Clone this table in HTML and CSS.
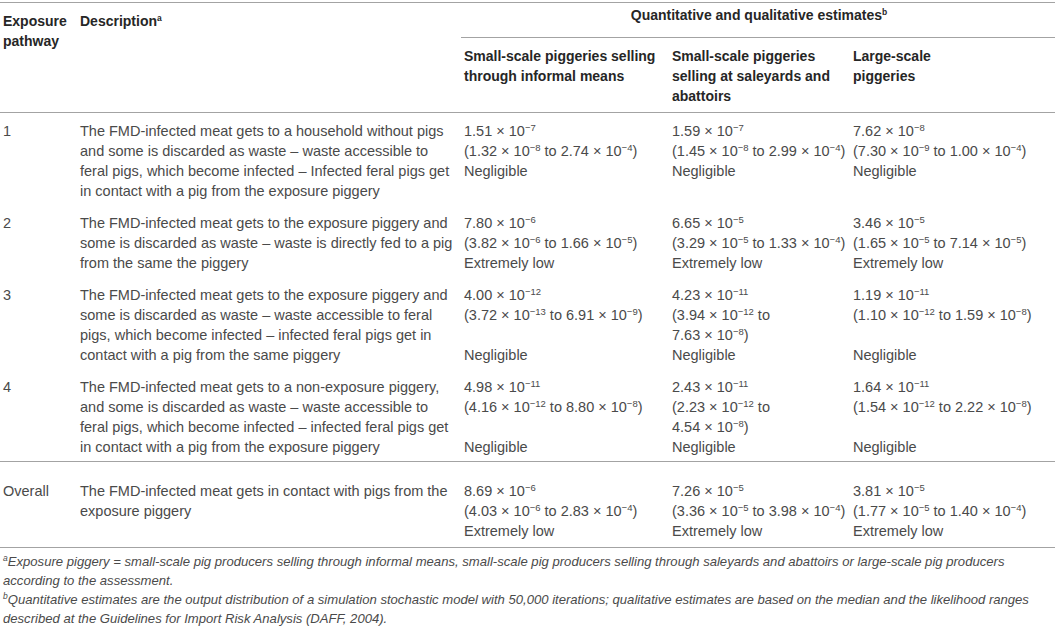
FILE: index.html
```
<!DOCTYPE html>
<html lang="en">
<head>
<meta charset="utf-8">
<title>Exposure pathways</title>
<link rel="stylesheet" href="styles.css">
</head>
<body class="page">
<table class="tbl">
  <colgroup>
    <col class="c-path"><col class="c-desc"><col class="c-q1"><col class="c-q2"><col class="c-q3">
  </colgroup>
  <thead class="thead">
    <tr>
      <th class="th th-side" rowspan="2">Exposure<br>pathway</th>
      <th class="th th-side" rowspan="2">Description<sup class="fn">a</sup></th>
      <th class="th th-span" colspan="3"><span class="span-label">Quantitative and qualitative estimates<sup class="fn">b</sup></span></th>
    </tr>
    <tr>
      <th class="th th-sub">Small-scale piggeries selling<br>through informal means</th>
      <th class="th th-sub">Small-scale piggeries<br>selling at saleyards and<br>abattoirs</th>
      <th class="th th-sub">Large-scale<br>piggeries</th>
    </tr>
  </thead>
  <tbody class="tbody">
    <tr class="row">
      <td class="td">1</td>
      <td class="td">The FMD-infected meat gets to a household without pigs<br>and some is discarded as waste – waste accessible to<br>feral pigs, which become infected – Infected feral pigs get<br>in contact with a pig from the exposure piggery</td>
      <td class="td">1.51 × 10<sup class="ex">−7</sup><br>(1.32 × 10<sup class="ex">−8</sup> to 2.74 × 10<sup class="ex">−4</sup>)<br>Negligible</td>
      <td class="td">1.59 × 10<sup class="ex">−7</sup><br>(1.45 × 10<sup class="ex">−8</sup> to 2.99 × 10<sup class="ex">−4</sup>)<br>Negligible</td>
      <td class="td">7.62 × 10<sup class="ex">−8</sup><br>(7.30 × 10<sup class="ex">−9</sup> to 1.00 × 10<sup class="ex">−4</sup>)<br>Negligible</td>
    </tr>
    <tr class="row">
      <td class="td">2</td>
      <td class="td">The FMD-infected meat gets to the exposure piggery and<br>some is discarded as waste – waste is directly fed to a pig<br>from the same the piggery</td>
      <td class="td">7.80 × 10<sup class="ex">−6</sup><br>(3.82 × 10<sup class="ex">−6</sup> to 1.66 × 10<sup class="ex">−5</sup>)<br>Extremely low</td>
      <td class="td">6.65 × 10<sup class="ex">−5</sup><br>(3.29 × 10<sup class="ex">−5</sup> to 1.33 × 10<sup class="ex">−4</sup>)<br>Extremely low</td>
      <td class="td">3.46 × 10<sup class="ex">−5</sup><br>(1.65 × 10<sup class="ex">−5</sup> to 7.14 × 10<sup class="ex">−5</sup>)<br>Extremely low</td>
    </tr>
    <tr class="row">
      <td class="td">3</td>
      <td class="td">The FMD-infected meat gets to the exposure piggery and<br>some is discarded as waste – waste accessible to feral<br>pigs, which become infected – infected feral pigs get in<br>contact with a pig from the same piggery</td>
      <td class="td">4.00 × 10<sup class="ex">−12</sup><br>(3.72 × 10<sup class="ex">−13</sup> to 6.91 × 10<sup class="ex">−9</sup>)<br><br>Negligible</td>
      <td class="td">4.23 × 10<sup class="ex">−11</sup><br>(3.94 × 10<sup class="ex">−12</sup> to<br>7.63 × 10<sup class="ex">−8</sup>)<br>Negligible</td>
      <td class="td">1.19 × 10<sup class="ex">−11</sup><br>(1.10 × 10<sup class="ex">−12</sup> to 1.59 × 10<sup class="ex">−8</sup>)<br><br>Negligible</td>
    </tr>
    <tr class="row">
      <td class="td">4</td>
      <td class="td">The FMD-infected meat gets to a non-exposure piggery,<br>and some is discarded as waste – waste accessible to<br>feral pigs, which become infected – infected feral pigs get<br>in contact with a pig from the exposure piggery</td>
      <td class="td">4.98 × 10<sup class="ex">−11</sup><br>(4.16 × 10<sup class="ex">−12</sup> to 8.80 × 10<sup class="ex">−8</sup>)<br><br>Negligible</td>
      <td class="td">2.43 × 10<sup class="ex">−11</sup><br>(2.23 × 10<sup class="ex">−12</sup> to<br>4.54 × 10<sup class="ex">−8</sup>)<br>Negligible</td>
      <td class="td">1.64 × 10<sup class="ex">−11</sup><br>(1.54 × 10<sup class="ex">−12</sup> to 2.22 × 10<sup class="ex">−8</sup>)<br><br>Negligible</td>
    </tr>
  </tbody>
  <tbody class="tbody">
    <tr class="row row-overall">
      <td class="td">Overall</td>
      <td class="td">The FMD-infected meat gets in contact with pigs from the<br>exposure piggery</td>
      <td class="td">8.69 × 10<sup class="ex">−6</sup><br>(4.03 × 10<sup class="ex">−6</sup> to 2.83 × 10<sup class="ex">−4</sup>)<br>Extremely low</td>
      <td class="td">7.26 × 10<sup class="ex">−5</sup><br>(3.36 × 10<sup class="ex">−5</sup> to 3.98 × 10<sup class="ex">−4</sup>)<br>Extremely low</td>
      <td class="td">3.81 × 10<sup class="ex">−5</sup><br>(1.77 × 10<sup class="ex">−5</sup> to 1.40 × 10<sup class="ex">−4</sup>)<br>Extremely low</td>
    </tr>
  </tbody>
</table>
<div class="notes">
  <p class="note"><sup class="nm">a</sup>Exposure piggery = small-scale pig producers selling through informal means, small-scale pig producers selling through saleyards and abattoirs or large-scale pig producers<br>according to the assessment.</p>
  <p class="note"><sup class="nm">b</sup>Quantitative estimates are the output distribution of a simulation stochastic model with 50,000 iterations; qualitative estimates are based on the median and the likelihood ranges<br>described at the Guidelines for Import Risk Analysis (DAFF, 2004).</p>
</div>
</body>
</html>
```

FILE: styles.css
```
.page {
  margin: 0;
  padding-top: 2px;
  background: #ffffff;
  font-family: "Liberation Sans", Arial, Helvetica, sans-serif;
  color: #4a4a4a;
}

.tbl {
  width: 1055px;
  border-collapse: collapse;
  table-layout: fixed;
}

.c-path { width: 77px; }
.c-desc { width: 384px; }
.c-q1 { width: 208px; }
.c-q2 { width: 181px; }
.c-q3 { width: 205px; }

.thead {
  border-top: 1px solid #a3a3a3;
  border-bottom: 1px solid #a3a3a3;
}

.th {
  font-weight: bold;
  font-size: 14px;
  line-height: 20px;
  color: #262626;
  text-align: left;
  vertical-align: top;
  padding: 0 3px;
  white-space: nowrap;
}

.th-side {
  padding-top: 8px;
}

.th-span {
  text-align: center;
  padding: 2px 0 12px 2px;
  border-bottom: 1px solid #a3a3a3;
}

.th-sub {
  padding-top: 8px;
  padding-bottom: 6px;
}

.fn {
  font-size: 8.5px;
  line-height: 0;
  vertical-align: 5px;
  font-weight: bold;
}

.tbody {
  border-bottom: 1px solid #a3a3a3;
}

.td {
  font-size: 14.5px;
  line-height: 20px;
  vertical-align: top;
  padding: 8px 3px 4px;
  white-space: nowrap;
}

.row-overall .td {
  padding-top: 19px;
  padding-bottom: 6px;
}

.ex {
  font-size: 9.5px;
  line-height: 0;
  vertical-align: 5px;
}

.notes {
  padding: 4px 3px 0;
}

.note {
  margin: 0;
  font-size: 13.1px;
  line-height: 19px;
  font-style: italic;
  color: #4a4a4a;
  white-space: nowrap;
}

.nm {
  font-size: 8.5px;
  line-height: 0;
  vertical-align: 5px;
}
```
